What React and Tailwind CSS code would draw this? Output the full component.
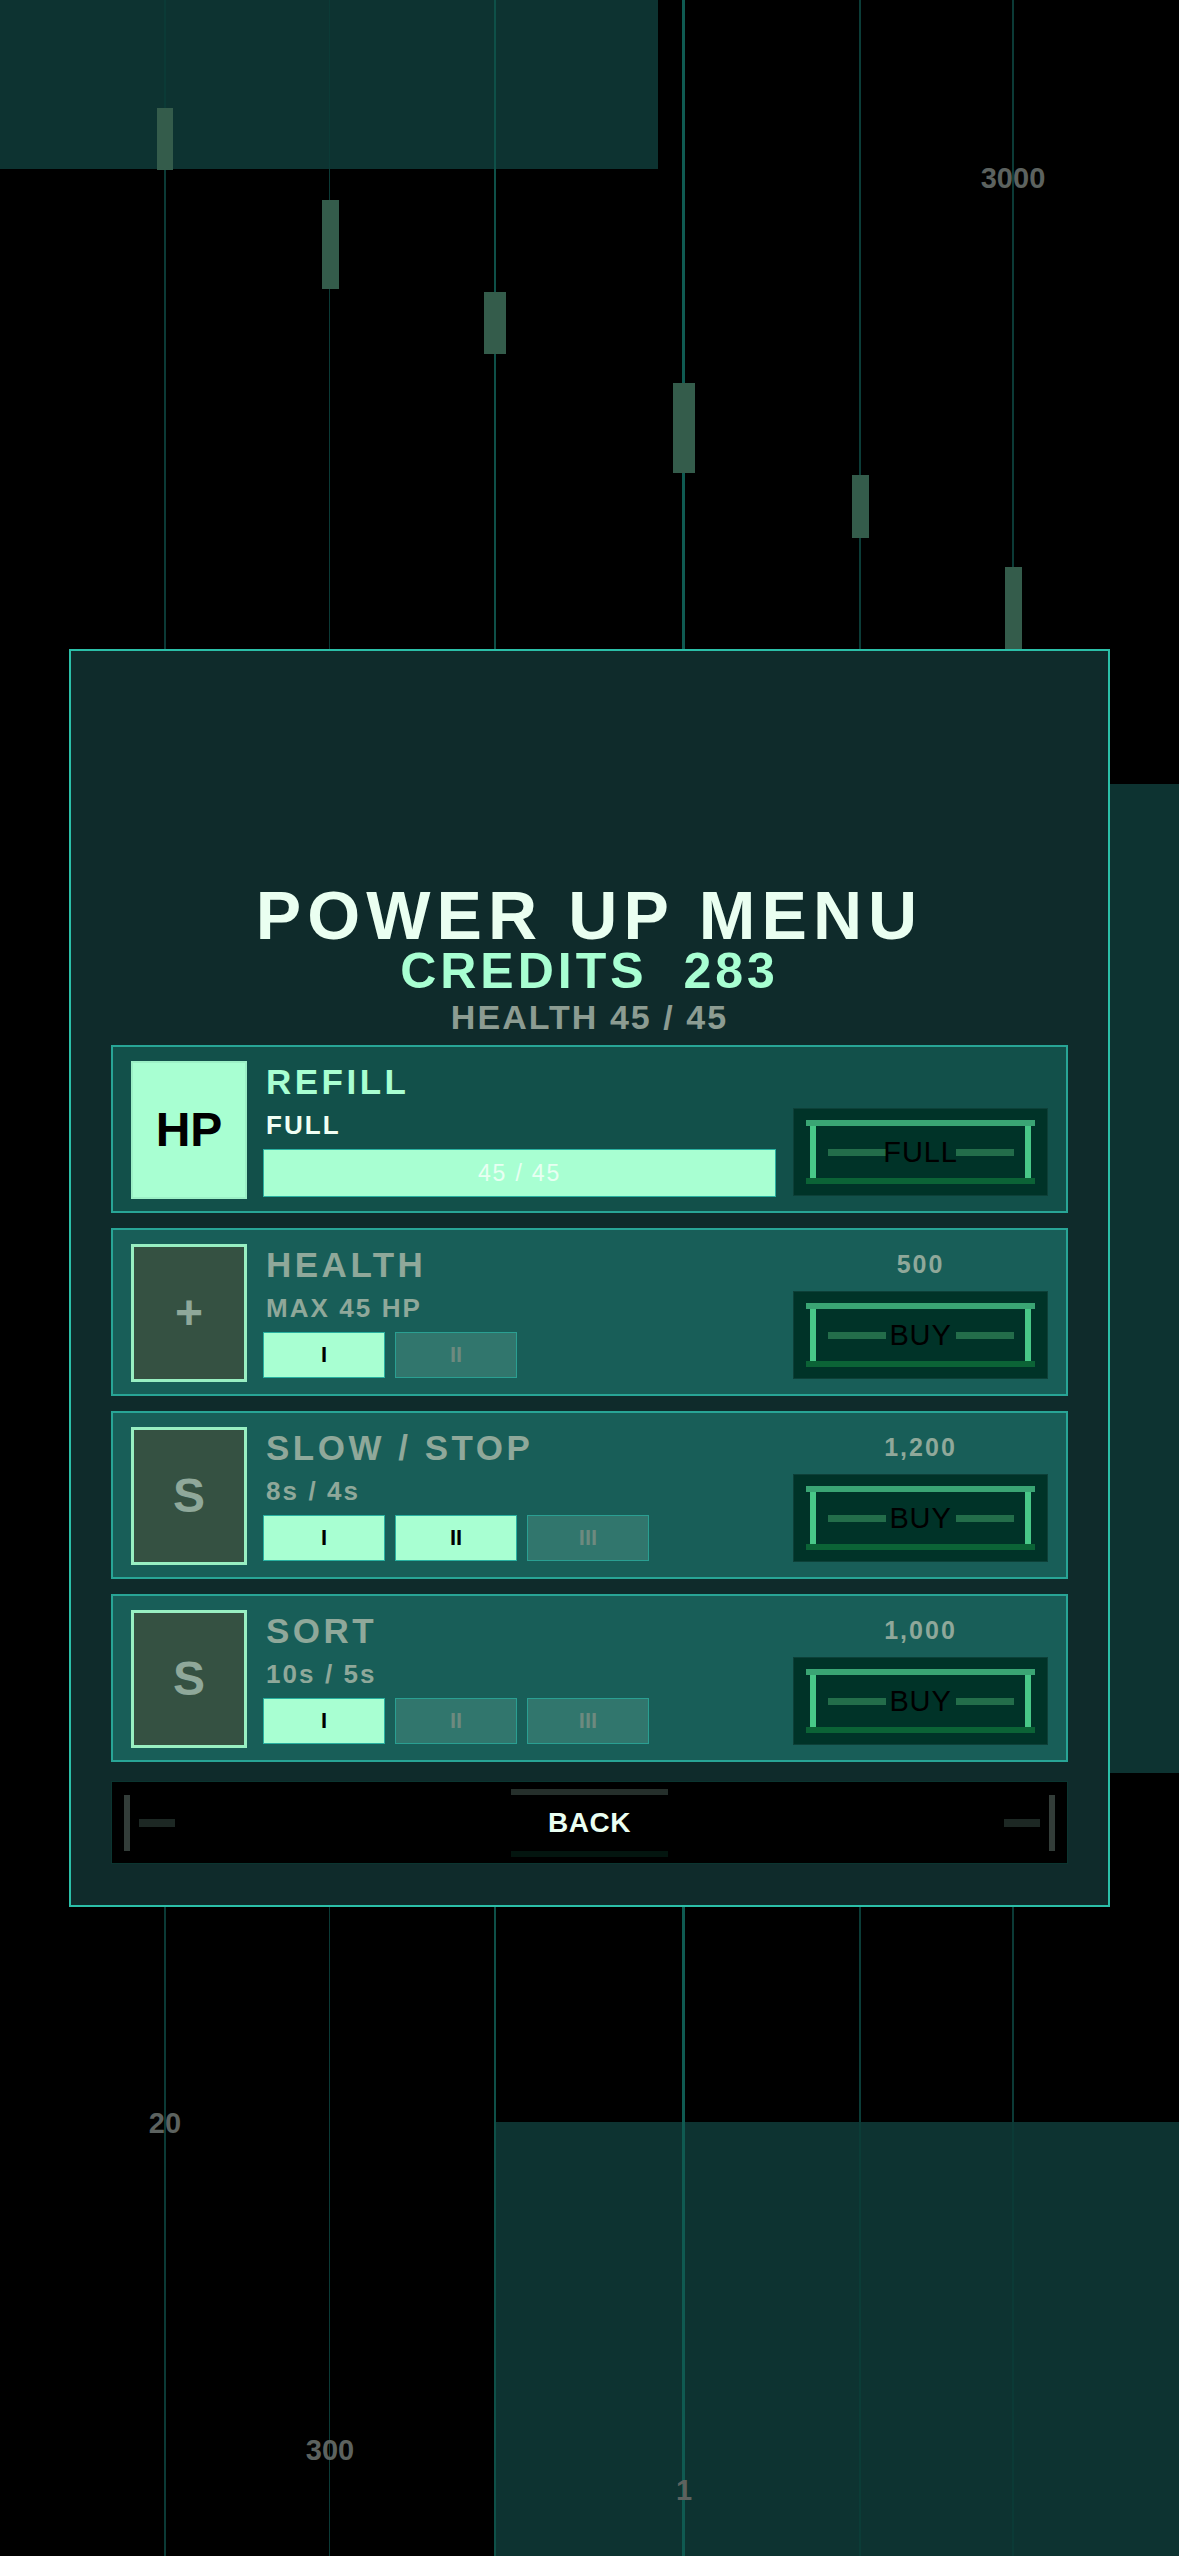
const notes = [
  { x: 157, w: 16, top: 108, h: 62 },
  { x: 322, w: 17, top: 200, h: 89 },
  { x: 484, w: 22, top: 292, h: 62 },
  { x: 673, w: 22, top: 383, h: 90 },
  { x: 852, w: 17, top: 475, h: 63 },
  { x: 1005, w: 17, top: 567, h: 90 },
];

const lanes = [
  { x: 164, w: 2, c: '#0b3a36' },
  { x: 329, w: 1, c: '#0b3a36' },
  { x: 494, w: 2, c: '#0e5048' },
  { x: 682, w: 3, c: '#0f5a51' },
  { x: 859, w: 2, c: '#0b3c37' },
  { x: 1012, w: 2, c: '#0b3a36' },
];

const labels = [
  { text: '3000', x: 1013, y: 178 },
  { text: '20', x: 165, y: 2123 },
  { text: '300', x: 330, y: 2450 },
  { text: '1', x: 684, y: 2490 },
];

const items = [
  { icon: 'HP', title: 'REFILL', sub: 'FULL', refill: true, btn: 'FULL' },
  { icon: '+', title: 'HEALTH', sub: 'MAX 45 HP', levels: 2, owned: 1, price: '500', btn: 'BUY' },
  { icon: 'S', title: 'SLOW / STOP', sub: '8s / 4s', levels: 3, owned: 2, price: '1,200', btn: 'BUY' },
  { icon: 'S', title: 'SORT', sub: '10s / 5s', levels: 3, owned: 1, price: '1,000', btn: 'BUY' },
];

const roman = ['I', 'II', 'III'];

function LaneCanvas() {
  return (
    <div className="absolute inset-0">
      <div className="absolute left-0 top-0 w-[658px] h-[169px] bg-[#0d3331]" />
      <div className="absolute left-[1040px] top-[784px] w-[139px] h-[989px] bg-[#0d3331]" />
      <div className="absolute left-[495px] top-[2122px] w-[684px] h-[434px] bg-[#0d3331]" />
      {lanes.map((l) => (
        <div
          key={l.x}
          className="absolute top-0 h-full"
          style={{ left: l.x, width: l.w, background: l.c }}
        />
      ))}
      {notes.map((n) => (
        <div
          key={n.x}
          className="absolute bg-[#345c4b]"
          style={{ left: n.x, top: n.top, width: n.w, height: n.h }}
        />
      ))}
      {labels.map((l) => (
        <div
          key={l.text}
          className="absolute -translate-x-1/2 -translate-y-1/2 text-[29px] leading-none font-bold text-[#5c625f]"
          style={{ left: l.x, top: l.y }}
        >
          {l.text}
        </div>
      ))}
    </div>
  );
}

function ActionButton({ label }) {
  return (
    <div className="w-[255px] h-[88px] bg-[#003328] border border-[#0d4038] px-[12px] py-[11px] flex flex-col">
      <div className="h-[6px] bg-[#3aa574]" />
      <div className="flex-1 mx-[4px] border-x-[6px] border-[#48c888] flex items-center justify-center">
        <div className="w-[58px] h-[7px] bg-[#236d4a]" />
        <div className="w-[70px] flex justify-center">
          <span className="relative z-10 whitespace-nowrap text-[29px] leading-none text-black tracking-[0.03em]">
            {label}
          </span>
        </div>
        <div className="w-[58px] h-[7px] bg-[#236d4a]" />
      </div>
      <div className="h-[6px] bg-[#0b6336]" />
    </div>
  );
}

function ShopCard({ item }) {
  const on = item.refill;
  return (
    <div
      className={`h-[168px] border-2 border-[#28a596] pt-[14px] pl-[18px] pr-[18px] flex ${
        on ? 'bg-[#12504a]' : 'bg-[#185e58]'
      }`}
    >
      <div
        className={`w-[116px] h-[138px] shrink-0 flex items-center justify-center text-[48px] leading-none font-bold ${
          on
            ? 'bg-[#a8ffd2] border-2 border-[#9cf0c6] text-black'
            : 'bg-[#355142] border-[3px] border-[#98efc2] text-[#8fa89a]'
        }`}
      >
        {item.icon}
      </div>
      <div className="ml-[16px] flex-1 flex flex-col">
        <div
          className={`mt-[3px] pl-[3px] text-[35px] leading-[35px] font-bold tracking-[0.1em] ${
            on ? 'text-[#a8ffd2]' : 'text-[#8fa89a]'
          }`}
        >
          {item.title}
        </div>
        <div
          className={`mt-[13px] pl-[3px] text-[26px] leading-[26px] font-bold tracking-[0.08em] ${
            on ? 'text-[#f0fff4]' : 'text-[#8fa89a]'
          }`}
        >
          {item.sub}
        </div>
        {on ? (
          <div className="mt-[11px] w-[513px] h-[48px] bg-[#a8ffd2] border border-[#2ab0a0] flex items-center justify-center text-[23px] leading-none text-[#e8fff2] tracking-[0.08em]">
            45 / 45
          </div>
        ) : (
          <div className="mt-[11px] flex gap-[10px]">
            {roman.slice(0, item.levels).map((r, i) => (
              <div
                key={r}
                className={`w-[122px] h-[46px] border flex items-center justify-center text-[22px] leading-none font-bold ${
                  i < item.owned
                    ? 'bg-[#a8ffd2] border-[#28b0a0] text-black'
                    : 'bg-[#31766d] border-[#2a9f92] text-[#6d8a7f]'
                }`}
              >
                {r}
              </div>
            ))}
          </div>
        )}
      </div>
      <div className="w-[255px] shrink-0 flex flex-col items-center">
        <div className="mt-[8px] h-[25px] text-[25px] leading-[25px] font-bold tracking-[0.08em] text-[#8fa89a]">
          {item.price}
        </div>
        <div className="mt-[14px]">
          <ActionButton label={item.btn} />
        </div>
      </div>
    </div>
  );
}

function BackBar() {
  return (
    <div className="mt-[4px] h-[83px] bg-black border border-[#0b3530] px-[12px] flex items-center justify-between">
      <div className="flex items-center gap-[9px]">
        <div className="w-[6px] h-[56px] bg-[#333d39]" />
        <div className="w-[36px] h-[8px] bg-[#1d2824]" />
      </div>
      <div className="flex flex-col items-center">
        <div className="w-[157px] h-[6px] bg-[#252f2b]" />
        <div className="mt-[14px] text-[28px] leading-[28px] font-bold tracking-[0.02em] text-[#eafff2]">
          BACK
        </div>
        <div className="mt-[14px] w-[157px] h-[6px] bg-[#03150f]" />
      </div>
      <div className="flex items-center gap-[9px]">
        <div className="w-[36px] h-[8px] bg-[#1d2824]" />
        <div className="w-[6px] h-[56px] bg-[#333d39]" />
      </div>
    </div>
  );
}

export default function App() {
  return (
    <div className="relative w-[1179px] h-[2556px] bg-black overflow-hidden font-['Liberation_Sans',Arial,sans-serif]">
      <LaneCanvas />
      <div className="relative h-full flex items-center justify-center">
        <div className="w-[1041px] h-[1258px] border-2 border-[#2bbfa8] bg-[#0f2b2b] px-[40px] pt-[233px] flex flex-col">
          <div className="text-center text-[68px] leading-[62px] font-bold tracking-[0.09em] text-[#eafff1]">
            POWER UP MENU
          </div>
          <div className="mt-[1px] text-center text-[50px] leading-[48px] font-bold tracking-[0.08em] text-[#a8ffd2] whitespace-pre">
            {'CREDITS  283'}
          </div>
          <div className="mt-[5px] text-center text-[34px] leading-[34px] font-bold tracking-[0.06em] text-[#8c9c92]">
            HEALTH 45 / 45
          </div>
          <div className="mt-[11px] flex flex-col gap-[15px]">
            {items.map((it) => (
              <ShopCard key={it.title} item={it} />
            ))}
          </div>
          <div className="mt-[15px]">
            <BackBar />
          </div>
        </div>
      </div>
    </div>
  );
}
